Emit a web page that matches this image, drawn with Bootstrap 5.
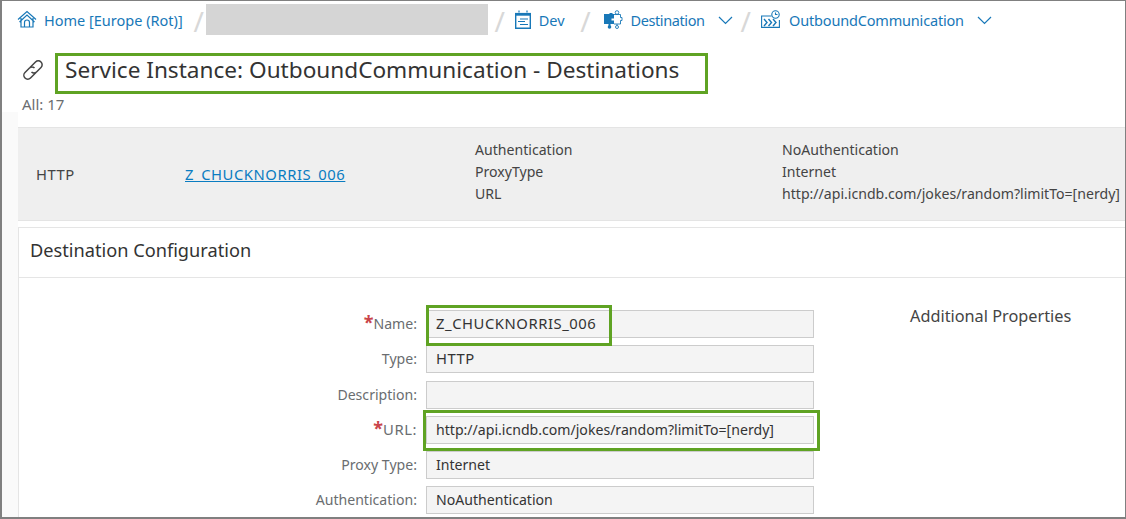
<!DOCTYPE html>
<html lang="en">
<head>
    <meta charset="UTF-8">
    <meta name="viewport" content="width=device-width, initial-scale=1.0">
    <title>Destinations</title>
    <link href="https://cdn.jsdelivr.net/npm/bootstrap@5.3.0/dist/css/bootstrap.min.css" rel="stylesheet">
    <style>
        html, body { height: 100%; overflow: hidden; }
        body { font-family: "Noto Sans", "Open Sans", sans-serif; font-size: 14.1px; color: #333; background: #fff; }
        a { color: #1878b8; }

        /* screenshot frame, the gray line round the whole picture */
        .shot-frame { position: relative; height: 519px; border: 1px solid #808080; border-left-width: 2px; border-bottom-width: 2px; overflow: hidden; background: linear-gradient(#fafafa, #fafafa) no-repeat 0 111px / 16px 100%; }

        .crumbs { height: 42px; padding: 9px 0 0 15px; color: #1878b8; font-size: 14.5px; }
        .crumbs svg { flex: none; }
        .crumb-home { margin-left: 7px; }
        .crumb-sep { flex: none; width: 11px; text-align: center; color: #d8d8d8; font-size: 28px; line-height: 22px; }
        .sep-home { margin: 0 1.5px 0 10.5px; }
        .sep-mask { margin: 0 9.5px 0 6.5px; }
        .sep-dev { margin: 0 11.5px 0 15.5px; }
        .sep-dest { margin: 0 10px 0 7.5px; }
        .crumb-mask { flex: none; width: 282px; height: 31px; background: #d5d5d5; margin-top: -6px; }
        .crumb-chevron { margin-left: 13px; }
        .tight-dest { letter-spacing: -.4px; }
        .tight-out { letter-spacing: -.18px; }
        .caps-text { font-size: 14.8px; letter-spacing: .55px; }

        .page-body { margin-left: 16px; }
        .title-row { height: 54px; padding-left: 4px; }
        .page-title { font-size: 22.6px; font-weight: 400; color: #333; margin: 0 0 0 21px; }
        .count-line { font-size: 15px; line-height: 21px; color: #6a6d70; padding-left: 4px; height: 33px; margin-top: -3px; }

        .dest-strip { height: 94px; background: #efefef; border-top: 1px solid #e4e4e4; border-bottom: 1px solid #e4e4e4; color: #444; }
        .strip-type { width: 167px; padding-left: 18px; }
        .strip-name { width: 290px; }
        .strip-name a { color: #0a7cc1; }
        .strip-key { width: 307px; line-height: 22px; margin-bottom: 4px; }
        .strip-val { line-height: 22px; white-space: nowrap; margin-bottom: 4px; }

        .config-panel { margin-top: 6px; border: 1px solid #e5e5e5; border-right: 0; border-bottom: 0; height: 300px; background: #fff; }
        .config-head { height: 50px; padding: 0 0 3px 11px; font-size: 18.2px; color: #333; border-bottom: 1px solid #e5e5e5; }
        .config-body { padding-top: 32px; }
        .form-col { width: 796px; flex: none; }
        .field-row { height: 28px; margin-bottom: 7.3px; }
        .field-label { width: 407px; text-align: right; color: #6a6d70; padding: 0 9px 1px 0; }
        .field-label b { color: #c9444a; font-weight: 700; font-size: 18px; line-height: 1; }
        .field-box { width: 388px; height: 28px; background: #f4f4f4; border: 1px solid #ccc; padding: 0 9px; color: #333; line-height: 26px; }
        .field-box.caps-text { line-height: 24px; }
        .extra-title { font-size: 16.3px; color: #444; margin-left: 95px; line-height: 24px; margin-top: -6px; }

        /* green call-outs drawn on top of the screenshot */
        .callout { position: absolute; border: 3px solid #5fa323; }
        .callout-title { left: 53px; top: 52px; width: 653px; height: 41px; }
        .callout-name { left: 424px; top: 304px; width: 186px; height: 41px; }
        .callout-url { left: 421px; top: 409px; width: 397px; height: 41px; }
    </style>
</head>
<body>
<div class="shot-frame">
    <div class="crumbs d-flex align-items-start">
        <svg width="20" height="18" viewBox="0 0 20 18" fill="none" stroke="#1878b8" stroke-width="1.200"><path d="M1 9.500 10 1.500l9 8M4 8v9h12V8M2.500 12 10 5l7.500 7M7.500 17v-4.500a2.500 2.500 0 0 1 5 0V17"/></svg>
        <a href="#" class="text-decoration-none crumb-home">Home [Europe (Rot)]</a>
        <span class="crumb-sep sep-home">/</span>
        <div class="crumb-mask"></div>
        <span class="crumb-sep sep-mask">/</span>
        <svg class="me-2" width="16" height="19" viewBox="0 0 16 19" fill="none" stroke="#1878b8" stroke-width="1.200"><path d="M.7 3v15.300h14.600V3" stroke-width="1.400"/><path d="M0 4.300h16" stroke-width="2.800"/><path d="M4 .5v2M12 .5v2"/><path d="M5 9h8M3 11.500h7M5 14.500h8"/></svg>
        <a href="#" class="text-decoration-none">Dev</a>
        <span class="crumb-sep sep-dev">/</span>
        <svg class="me-2" width="20" height="19" viewBox="0 0 20 19"><path fill="#1878b8" d="M1 4h5.500v-1h3v1h1.500v4.500H8.500v2H11V14H7.500v2.500h-2V14H1z"/><circle cx="6.500" cy="17" r="1.800" fill="#1878b8"/><g fill="none" stroke="#1878b8" stroke-width=".9"><circle cx="14" cy="2.500" r="1.800"/><path d="M11 4.500h6.500v3h1.500v3h-1.500V14H11M14 14v1.500"/><circle cx="14" cy="17" r="1.500"/></g></svg>
        <a href="#" class="text-decoration-none tight-dest">Destination</a>
        <svg class="crumb-chevron" width="15" height="18" viewBox="0 0 15 18" fill="none" stroke="#1878b8" stroke-width="1.200"><path d="m1 7 6.500 6.500L14 7"/></svg>
        <span class="crumb-sep sep-dest">/</span>
        <svg class="me-2" width="20" height="18" viewBox="0 0 20 18" fill="none" stroke="#1878b8" stroke-width="1.100"><path d="M10.500 6H.6v11.400h17.800V10"/><circle cx="14.500" cy="4.500" r="3.700"/><path d="M14.500 2.500v2h2"/><path d="m3 9 3 3.500L3 16M7.500 9l3 3.500-3 3.500M12 9l3 3.500-3 3.500" stroke-width="1.400"/></svg>
        <a href="#" class="text-decoration-none tight-out">OutboundCommunication</a>
        <svg class="crumb-chevron" width="15" height="18" viewBox="0 0 15 18" fill="none" stroke="#1878b8" stroke-width="1.200"><path d="m1 7 6.500 6.500L14 7"/></svg>
    </div>

    <div class="page-body">
        <div class="title-row d-flex align-items-center">
            <svg width="22" height="22" viewBox="0 0 22 22" fill="none" stroke="#444" stroke-width="1.500"><path d="M8 8.500 13.500 3a3.600 3.600 0 0 1 5.500 5.500l-4.500 4.500a3.500 3.500 0 0 1-5 0M14 13.500 8.500 19A3.600 3.600 0 0 1 3 13.500L7.500 9a3.500 3.500 0 0 1 5 0"/></svg>
            <h1 class="page-title">Service Instance: OutboundCommunication - Destinations</h1>
        </div>
        <div class="count-line">All: 17</div>

        <div class="dest-strip d-flex align-items-center">
            <div class="strip-type caps-text">HTTP</div>
            <div class="strip-name"><a href="#" class="caps-text">Z_CHUCKNORRIS_006</a></div>
            <div class="strip-key">Authentication<br>ProxyType<br>URL</div>
            <div class="strip-val">NoAuthentication<br>Internet<br>http://api.icndb.com/jokes/random?limitTo=[nerdy]</div>
        </div>

        <div class="config-panel">
            <div class="config-head d-flex align-items-center">Destination Configuration</div>
            <div class="config-body d-flex">
                <div class="form-col">
                    <div class="field-row d-flex align-items-center"><div class="field-label"><b>*</b>Name:</div><div class="field-box caps-text">Z_CHUCKNORRIS_006</div></div>
                    <div class="field-row d-flex align-items-center"><div class="field-label">Type:</div><div class="field-box caps-text">HTTP</div></div>
                    <div class="field-row d-flex align-items-center"><div class="field-label">Description:</div><div class="field-box"></div></div>
                    <div class="field-row d-flex align-items-center"><div class="field-label"><b>*</b><span class="caps-text">URL:</span></div><div class="field-box">http://api.icndb.com/jokes/random?limitTo=[nerdy]</div></div>
                    <div class="field-row d-flex align-items-center"><div class="field-label">Proxy Type:</div><div class="field-box">Internet</div></div>
                    <div class="field-row d-flex align-items-center"><div class="field-label">Authentication:</div><div class="field-box">NoAuthentication</div></div>
                </div>
                <div class="extra-title">Additional Properties</div>
            </div>
        </div>
    </div>

    <div class="callout callout-title"></div>
    <div class="callout callout-name"></div>
    <div class="callout callout-url"></div>
</div>
</body>
</html>
